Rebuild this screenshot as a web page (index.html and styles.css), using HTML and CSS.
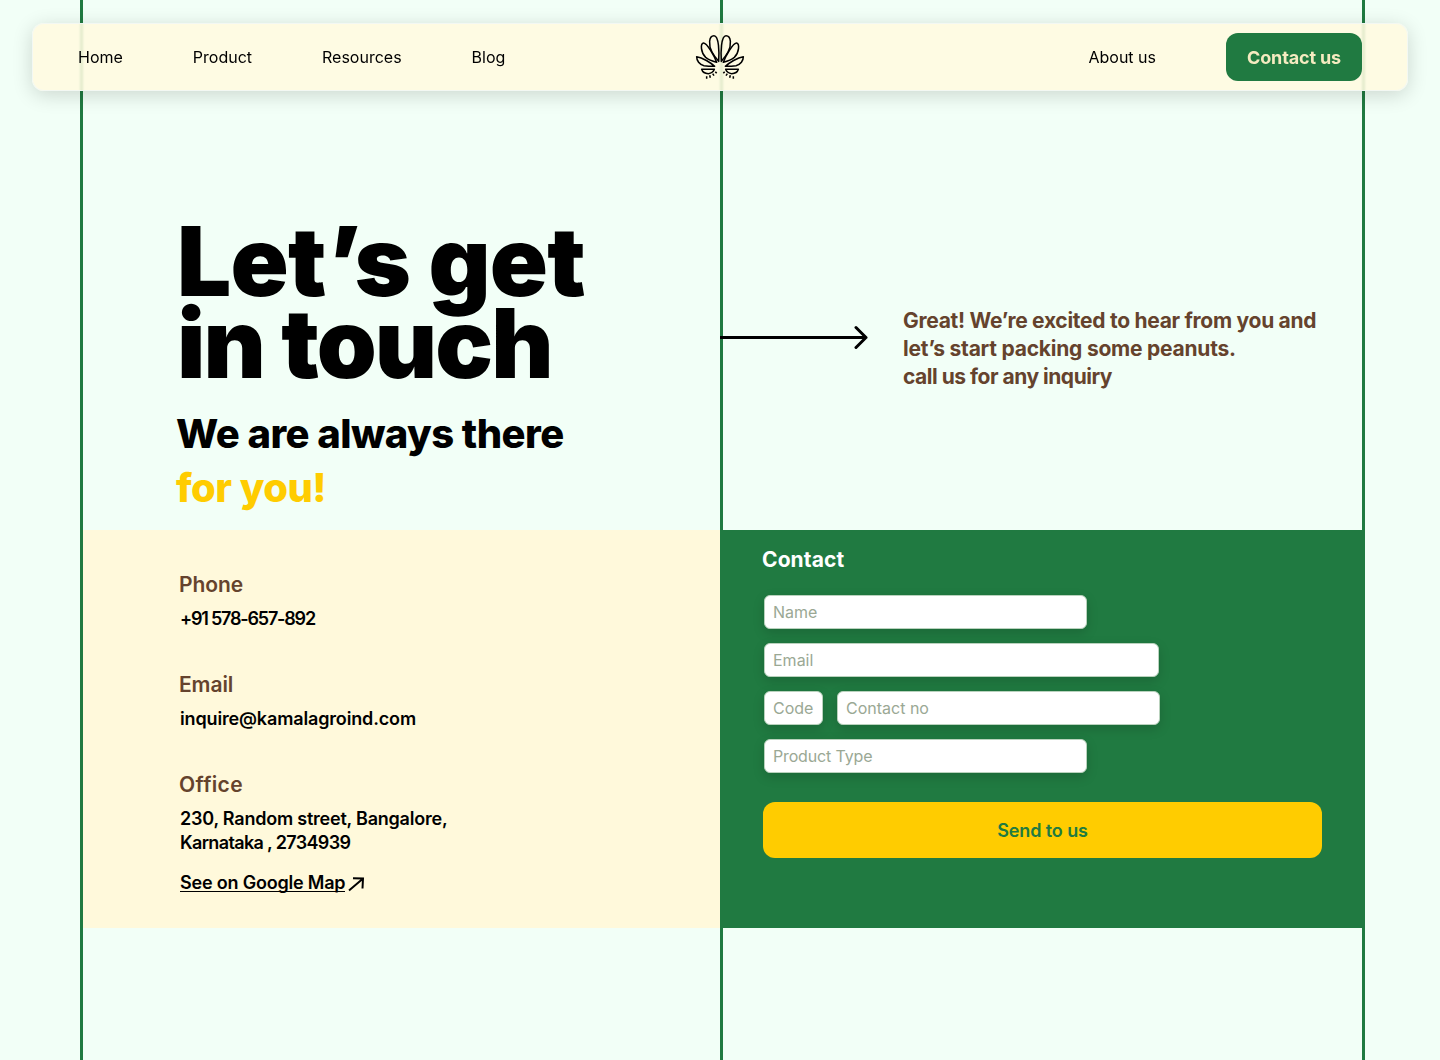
FILE: index.html
```
<!DOCTYPE html>
<html lang="en">
<head>
    <meta charset="UTF-8">
    <meta name="viewport" content="width=device-width, initial-scale=1.0">
    <title>Contact us</title>
    <link rel="stylesheet" href="styles.css">
</head>
<body>

    <header class="navbar">
        <nav class="nav-left">
            <a href="#">Home</a>
            <a href="#">Product</a>
            <a href="#">Resources</a>
            <a href="#">Blog</a>
        </nav>
        <svg class="logo" viewBox="0 0 180 162">
            <g id="wing">
                <path d="M86 94 C88 68 87 17 72 17 C56 17 55 46 66 66 C73 79 80 87 86 94 Z" />
                <path d="M80 97 C72 75 50 38 40 39 C31 41 32 68 47 82 C58 91 69 94 80 97 Z" />
                <path d="M74 109 C62 98 38 83 20 80 C20 92 28 104 42 107 C54 109 64 109 74 109 Z" />
                <path d="M73 118 L35 118 C38 128 46 131 55 131 C64 130 70 126 73 118 Z" />
                <path d="M50 139 V146 M59 136 L61 143 M68 131 L72 137 M76 125 L80 130" />
            </g>
            <use href="#wing" transform="translate(180 0) scale(-1 1)" />
        </svg>
        <div class="nav-right">
            <a href="#">About us</a>
            <a href="#" class="contact-button">Contact us</a>
        </div>
    </header>

    <main class="grid">
        <section class="hero">
            <h1>Let’s get<br><span class="touch">in touch</span></h1>
            <h2>We are always there<br><span class="yellow">for you!</span></h2>
        </section>

        <section class="intro">
            <svg class="arrow" viewBox="0 0 150 26">
                <path d="M0 13.5 H146 M136 3.5 L146 13.5 L136 23.5" />
            </svg>
            <p>Great! We’re excited to hear from you and<br><span class="middle-line">let’s start packing some peanuts.</span><br><span class="last-line">call us for any inquiry</span></p>
        </section>

        <section class="info">
            <div class="info-item">
                <h3>Phone</h3>
                <p class="phone">+91 578-657-892</p>
            </div>
            <div class="info-item">
                <h3>Email</h3>
                <p class="email">inquire@kamalagroind.com</p>
            </div>
            <div class="info-item">
                <h3 class="office">Office</h3>
                <p class="address">230, Random street, Bangalore,<br><span class="city">Karnataka , 2734939</span></p>
                <a href="#" class="map-link"><span>See on Google Map</span>
                    <svg viewBox="0 0 18 16"><path d="M2 14.5 L15.5 3 M6 2.2 L16 2.5 L15.5 12.5" /></svg>
                </a>
            </div>
        </section>

        <section class="contact">
            <h3>Contact</h3>
            <form>
                <input type="text" class="medium" placeholder="Name">
                <input type="email" class="wide" placeholder="Email">
                <div class="form-row">
                    <input type="text" class="code" placeholder="Code">
                    <input type="text" class="medium" placeholder="Contact no">
                </div>
                <input type="text" class="medium type" placeholder="Product Type">
                <button type="submit">Send to us</button>
            </form>
        </section>
    </main>

</body>
</html>
```
FILE: styles.css
```
* {
    box-sizing: border-box;
}

body {
    margin: 0;
    height: 1060px;
    overflow: hidden;
    background-color: #f2fff7;
    color: #000;
    font-family: Inter, "Liberation Sans", sans-serif;
}

h1, h2, h3, p {
    margin: 0;
}

a {
    color: inherit;
    text-decoration: none;
}

/* Navbar */
.navbar {
    position: absolute;
    top: 23px;
    left: 32px;
    right: 32px;
    height: 68px;
    padding: 0 46px;
    display: grid;
    grid-template-columns: 1fr 60px 1fr;
    align-items: center;
    background-color: rgba(255, 250, 224, 0.88);
    backdrop-filter: blur(1px);
    border-radius: 12px;
    box-shadow: 0 4px 20px rgba(0, 0, 0, 0.16), 0 0 0 1px rgba(240, 248, 246, 0.8) inset;
    font-size: 16px;
    z-index: 1;
}

.nav-left,
.nav-right {
    display: flex;
    align-items: center;
    gap: 70px;
}

.nav-right {
    justify-content: flex-end;
}

.logo {
    width: 60px;
    height: 54px;
    fill: none;
    stroke: #000;
    stroke-width: 4.6;
    stroke-linejoin: round;
}

.contact-button {
    width: 136px;
    height: 48px;
    line-height: 49px;
    text-align: center;
    background-color: #207a41;
    color: #f5ebc0;
    font-size: 18px;
    font-weight: 700;
    letter-spacing: -0.15px;
    border-radius: 12px;
}

/* Page grid with the three green lines */
.grid {
    display: grid;
    grid-template-columns: 640px 645px;
    grid-template-rows: 530px 398px 132px;
    width: 1285px;
    height: 1060px;
    margin-left: 80px;
    background:
        linear-gradient(#207a41, #207a41) 0 0 / 3px 100% no-repeat,
        linear-gradient(#207a41, #207a41) 640px 0 / 3px 100% no-repeat,
        linear-gradient(#207a41, #207a41) 100% 0 / 3px 100% no-repeat;
}

.hero {
    padding: 220px 0 0 96px;
}

.hero h1 {
    margin-left: 1px;
    font-size: 96px;
    font-weight: 900;
    line-height: 82px;
    letter-spacing: -0.8px;
}

.touch {
    letter-spacing: -1.9px;
}

.hero h2 {
    margin-top: 23px;
    font-size: 40px;
    font-weight: 800;
    line-height: 54px;
    letter-spacing: -0.55px;
}

.yellow {
    color: #ffcc00;
}

.intro {
    display: flex;
    align-items: flex-start;
    padding-top: 307px;
    color: #65432d;
    font-size: 21px;
    font-weight: 700;
    line-height: 28px;
    letter-spacing: -0.28px;
    white-space: nowrap;
}

.arrow {
    width: 150px;
    height: 26px;
    margin: 17px 33px 0 0;
    fill: none;
    stroke: #000;
    stroke-width: 3;
    stroke-linecap: round;
    stroke-linejoin: round;
}

.middle-line {
    letter-spacing: -0.23px;
}

.last-line {
    letter-spacing: -0.48px;
}

/* Contact details */
.info {
    margin-left: 3px;
    padding: 41px 0 0 97px;
    background-color: #fff9db;
    font-size: 18px;
    font-weight: 600;
    line-height: 24px;
}

.info-item {
    margin-bottom: 40px;
}

.info h3 {
    margin: 0 0 8px -1px;
    color: #65432d;
    font-size: 21px;
    font-weight: 600;
    line-height: 28px;
    letter-spacing: -0.1px;
}

.info .office {
    letter-spacing: 0.35px;
}

.phone {
    letter-spacing: -1.2px;
}

.email {
    letter-spacing: -0.15px;
}

.address {
    letter-spacing: -0.22px;
}

.city {
    letter-spacing: -0.65px;
}

.map-link {
    display: flex;
    align-items: flex-start;
    gap: 2px;
    margin-top: 16px;
    letter-spacing: -0.2px;
}

.map-link span {
    height: 21px;
    border-bottom: 1px solid #000;
}

.map-link svg {
    width: 18px;
    height: 16px;
    margin-top: 5px;
    fill: none;
    stroke: #000;
    stroke-width: 2;
}

/* Form */
.contact {
    padding: 16px 43px 0 42px;
    background-color: #207a41;
}

.contact h3 {
    color: #fff;
    font-size: 21px;
    font-weight: 700;
    line-height: 28px;
    letter-spacing: 0.1px;
}

form {
    display: flex;
    flex-direction: column;
    align-items: flex-start;
    gap: 14px;
    margin: 21px 0 0 1px;
}

.form-row {
    display: flex;
    gap: 14px;
}

input {
    height: 34px;
    margin: 0 0 0 1px;
    padding: 0 8px;
    border: 1px solid #b9d2bd;
    border-radius: 6px;
    background-color: #fff;
    box-shadow: 0 4px 12px rgba(0, 0, 0, 0.15);
    font-family: inherit;
    font-size: 16px;
}

input::placeholder {
    color: #9aa894;
}

.medium {
    width: 323px;
}

.wide {
    width: 395px;
}

.code {
    width: 59px;
}

.form-row .medium {
    margin-left: 0;
}

.type {
    letter-spacing: -0.15px;
}

button {
    width: 559px;
    height: 56px;
    margin-top: 15px;
    padding: 0;
    border: none;
    border-radius: 12px;
    background-color: #ffcc00;
    color: #207a41;
    font-family: inherit;
    font-size: 18px;
    font-weight: 600;
    letter-spacing: -0.1px;
    cursor: pointer;
}
```
